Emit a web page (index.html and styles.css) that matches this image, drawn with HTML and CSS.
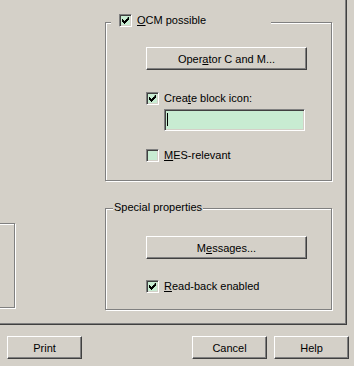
FILE: index.html
```html
<!DOCTYPE html>
<html>
<head>
<meta charset="utf-8">
<link rel="stylesheet" href="styles.css">
</head>
<body>
<div class="page">
  <div class="panel">
    <div class="leftcol">
      <div class="leftbox"></div>
    </div>
    <div class="rightcol">
      <div class="group group1">
        <div class="legend">
          <span class="cb checked"><svg width="7" height="7" viewBox="0 0 7 7"><path d="M6 0h1v3h-1v1h-1v1h-1v1h-1v1h-1v-1h-1v-1h-1v-3h1v1h1v1h1v-1h1v-1h1z" fill="#000"/></svg></span>
          <span class="lbl"><u>O</u>CM possible</span>
        </div>
        <div class="btn wide">Oper<u>a</u>tor C and M...</div>
        <div class="row r-create">
          <span class="cb checked"><svg width="7" height="7" viewBox="0 0 7 7"><path d="M6 0h1v3h-1v1h-1v1h-1v1h-1v1h-1v-1h-1v-1h-1v-3h1v1h1v1h1v-1h1v-1h1z" fill="#000"/></svg></span>
          <span class="lbl">Crea<u>t</u>e block icon:</span>
        </div>
        <div class="input"><span class="caret"></span></div>
        <div class="row r-mes">
          <span class="cb"></span>
          <span class="lbl"><u>M</u>ES-relevant</span>
        </div>
      </div>
      <div class="group group2">
        <div class="caption">Special properties</div>
        <div class="btn wide">M<u>e</u>ssages...</div>
        <div class="row r-read">
          <span class="cb checked"><svg width="7" height="7" viewBox="0 0 7 7"><path d="M6 0h1v3h-1v1h-1v1h-1v1h-1v1h-1v-1h-1v-1h-1v-3h1v1h1v1h1v-1h1v-1h1z" fill="#000"/></svg></span>
          <span class="lbl"><u>R</u>ead-back enabled</span>
        </div>
      </div>
    </div>
  </div>
  <div class="footer">
    <div class="btn small">Print</div>
    <div class="spacer"></div>
    <div class="btn small">Cancel</div>
    <div class="btn small">Help</div>
  </div>
</div>
</body>
</html>
```
FILE: styles.css
```css
* { box-sizing: border-box; }
html, body { margin: 0; padding: 0; }
body {
  background: #d4d0c8;
  font-family: "Liberation Sans", Arial, sans-serif;
  font-size: 11px;
  color: #000;
  overflow: hidden;
}
.page {
  width: 354px;
  height: 366px;
  display: flex;
  flex-direction: column;
}
.panel {
  width: 347px;
  height: 325px;
  display: flex;
  border-right: 1px solid #404040;
  border-bottom: 1px solid #404040;
  box-shadow: inset -1px -1px #808080;
  flex: none;
}
.leftcol {
  width: 105px;
  flex: none;
  overflow: hidden;
}
.leftbox {
  margin-top: 223px;
  margin-left: -25px;
  width: 40px;
  height: 85px;
  border: 1px solid #808080;
  box-shadow: inset 1px 1px #fff, 1px 1px #fff;
}
.rightcol {
  padding-top: 22px;
  display: flex;
  flex-direction: column;
}
.group {
  position: relative;
  width: 227px;
  border: 1px solid #808080;
  box-shadow: inset 1px 1px #fff, 1px 1px #fff;
  padding-left: 40px;
  display: flex;
  flex-direction: column;
  align-items: flex-start;
}
.group1 {
  height: 159px;
  padding-top: 24px;
}
.group2 {
  margin-top: 27px;
  height: 102px;
  padding-top: 27px;
}
.legend {
  position: absolute;
  left: 5px;
  top: -9px;
  width: 160px;
  height: 13px;
  padding-left: 8px;
  background: #d4d0c8;
  display: flex;
  align-items: center;
}
.caption {
  position: absolute;
  left: 7px;
  top: -8px;
  padding: 0 1px 0 1px;
  line-height: 13px;
  background: #d4d0c8;
}
.row {
  display: flex;
  align-items: center;
  height: 13px;
}
.lbl {
  margin-left: 5px;
  line-height: 13px;
  white-space: nowrap;
}
.cb {
  width: 13px;
  height: 13px;
  flex: none;
  background: #c8ecd2;
  border: 1px solid;
  border-color: #808080 #fff #fff #808080;
  box-shadow: inset 1px 1px #404040, inset -1px -1px #d4d0c8;
  display: flex;
  align-items: center;
  justify-content: center;
}
.cb svg { display: block; }
.btn {
  height: 23px;
  display: flex;
  align-items: center;
  justify-content: center;
  border: 1px solid;
  border-color: #fff #404040 #404040 #fff;
  box-shadow: inset -1px -1px #808080;
  background: #d4d0c8;
  white-space: nowrap;
  flex: none;
}
.wide { width: 161px; }
.r-create { margin-top: 22px; }
.input {
  margin-top: 4px;
  margin-left: 18px;
  width: 141px;
  height: 22px;
  background: #c8ecd2;
  border: 1px solid;
  border-color: #808080 #fff #fff #808080;
  box-shadow: inset 1px 1px #404040, inset -1px -1px #d4d0c8;
  padding: 3px 0 0 2px;
}
.caret {
  display: block;
  width: 1px;
  height: 13px;
  background: #000;
}
.r-mes { margin-top: 18px; }
.r-read { margin-top: 21px; }
.footer {
  display: flex;
  padding: 11px 0 0 7px;
  gap: 7px;
}
.small { width: 75px; }
.spacer { width: 96px; flex: none; }
```
